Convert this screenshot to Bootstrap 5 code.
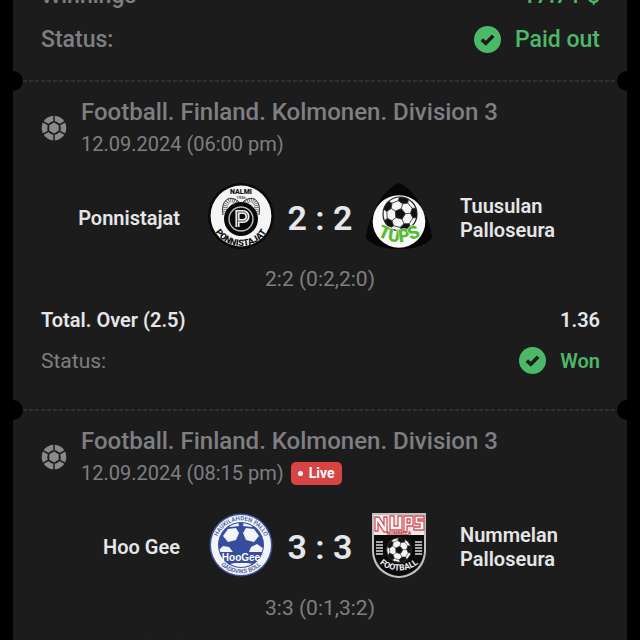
<!DOCTYPE html>
<html lang="en" data-bs-theme="dark">
<head>
<meta charset="utf-8">
<meta name="viewport" content="width=device-width, initial-scale=1">
<title>Bet slip</title>
<link href="https://cdn.jsdelivr.net/npm/bootstrap@5.3.0/dist/css/bootstrap.min.css" rel="stylesheet">
<style>
  body { background: #000; font-family: Roboto, "Liberation Sans", sans-serif; font-size: 20px; line-height: 24px; color: #e6e6e8; overflow-x: hidden; }
  .slip { background: #1c1c1d; margin: 0 13px; }
  .summary { font-size: 23px; font-weight: 500; margin-top: -27px; padding-bottom: 20px; }
  .slip-row { min-height: 41px; padding: 0 27px 0 28px; }
  .payout { min-height: 46px; }
  .dim { color: #7f7f82; }
  .good { color: #4cb968; }
  .state-label { font-size: 21px; }
  .tick { width: 27px; height: 27px; margin-right: 14px; }
  .event { position: relative; padding: 14px 0 28px; }
  .event::before, .event::after { content: ""; position: absolute; top: -11px; width: 20px; height: 20px; border-radius: 50%; background: #000; }
  .event::before { left: -10px; }
  .event::after { right: -10px; }
  .perforation { height: 2px; margin: 0 10px; background: repeating-linear-gradient(90deg, #303032 0 4px, transparent 4px 6px); }
  .event-head { padding: 0 27px 0 28px; gap: 14px; }
  .event-head .ball { width: 26px; height: 26px; }
  .league { font-size: 24px; line-height: 32px; font-weight: 500; }
  .kickoff { font-size: 20px; line-height: 32px; }
  .live { background: #d84343; font-size: 14px; line-height: 23px; padding: 0 7px; border-radius: 5px; font-weight: 700; color: #fff; gap: 6px; margin-left: 7px; }
  .live::before { content: ""; width: 5px; height: 5px; border-radius: 50%; background: #fff; }
  .teams { padding: 0 27px; margin-top: 23px; gap: 28px; font-weight: 600; }
  .duel { width: 224px; }
  .crest { width: 66px; height: 66px; }
  .score { font-size: 34px; line-height: 40px; font-weight: 600; margin-top: 4px; }
  .team-name { padding-top: 3px; }
  .periods { font-size: 21px; line-height: 30px; margin: 15px 0 5px; }
</style>
<script src="https://cdn.jsdelivr.net/npm/bootstrap@5.3.0/dist/js/bootstrap.bundle.min.js"></script>
</head>
<body>
<svg width="0" height="0" class="position-absolute" aria-hidden="true">
  <symbol id="tick" viewBox="0 0 27 27">
    <circle cx="13.5" cy="13.5" r="13.5" fill="#4cb968"/>
    <path d="M7.8 13.6 11.8 17.3 19.2 9.8" fill="none" stroke="#1c1c1d" stroke-width="3.6"/>
  </symbol>
  <symbol id="ball" viewBox="0 0 26 26">
    <circle cx="13" cy="13" r="12.3" fill="#8a8a8d"/>
    <circle cx="13" cy="13" r="6.8" fill="#1c1c1d"/>
    <path d="M13 7.600 17.700 10.300V15.700L13 18.400 8.300 15.700V10.300Z" fill="#8a8a8d"/>
    <path d="M13 0V7M13 19V26M18.200 10 24.500 6.400M18.200 16 24.500 19.600M7.800 10 1.500 6.400M7.800 16 1.500 19.600" fill="none" stroke="#1c1c1d" stroke-width="1.5"/>
  </symbol>
  <clipPath id="ballEdge"><circle r="17"/></clipPath>
  <symbol id="football" viewBox="-18 -18 36 36">
    <circle r="17" fill="#f5f5f5"/>
    <g clip-path="url(#ballEdge)" fill="#111" stroke="#333" stroke-width=".8" transform="rotate(14)">
      <path d="M0-5.5 5.2-1.7 3.2 4.5-3.2 4.5-5.2-1.7Z"/>
      <g id="patch"><path d="M0-10.5 4.9-12.5 4.5-18H-4.5L-4.9-12.5Z"/><path d="M0-5.5V-10.5M4.9-12.5 10.4-8.5" fill="none"/></g>
      <use href="#patch" transform="rotate(72)"/>
      <use href="#patch" transform="rotate(144)"/>
      <use href="#patch" transform="rotate(216)"/>
      <use href="#patch" transform="rotate(288)"/>
    </g>
    <circle r="17" fill="none" stroke="#222" stroke-width="1.2"/>
  </symbol>
</svg>
<main class="slip min-vh-100">
  <section class="summary">
    <div class="slip-row payout d-flex align-items-center justify-content-between"><span class="dim">Winnings</span><span class="good">17.71 $</span></div>
    <div class="slip-row d-flex align-items-center justify-content-between"><span class="dim">Status:</span><span class="good d-flex align-items-center"><svg class="tick" aria-hidden="true"><use href="#tick"/></svg>Paid out</span></div>
  </section>

  <div class="perforation"></div>
  <section class="event">
    <header class="event-head d-flex align-items-center dim">
      <svg class="ball flex-shrink-0" aria-hidden="true"><use href="#ball"/></svg>
      <div>
        <div class="league">Football. Finland. Kolmonen. Division 3</div>
        <div class="kickoff">12.09.2024 (06:00 pm)</div>
      </div>
    </header>
    <div class="teams d-flex align-items-center">
      <div class="team-name col text-end">Ponnistajat</div>
      <div class="duel d-flex align-items-center justify-content-between flex-shrink-0">
        <svg class="crest" viewBox="0 0 66 66" role="img" aria-label="Ponnistajat crest">
          <defs><path id="arcA" d="M4.5 41A29 27 0 0 0 61.5 41"/></defs>
          <circle cx="33" cy="33" r="33" fill="#090909"/>
          <circle cx="33" cy="33" r="30.4" fill="#f5f5f5"/>
          <text x="33" y="11" text-anchor="middle" font-size="7" font-weight="900" fill="#111">NALMI</text>
          <text x="33" y="15.5" text-anchor="middle" font-size="4" font-weight="700" fill="#444">1926</text>
          <g fill="none" stroke="#777" stroke-width="5">
            <path d="M30 21C23 13 15 18 18 31" stroke-dasharray="1 1"/>
            <path d="M36 21C43 13 51 18 48 31" stroke-dasharray="1 1"/>
            <path d="M31 19C22 11 12 17 15 32M35 19C44 11 54 17 51 32" stroke="#333" stroke-width="1"/>
          </g>
          <circle cx="33" cy="36" r="17" fill="#090909"/>
          <circle cx="33" cy="36" r="12" fill="none" stroke="#bbb" stroke-width="1.4"/>
          <path d="M29.5 44V29H35C41 29 41 38 35 38H30" fill="none" stroke="#e8e8e8" stroke-width="4.2"/>
          <path d="M29.5 44V29H35C41 29 41 38 35 38H30" fill="none" stroke="#333" stroke-width=".8"/>
          <text font-size="9" font-weight="900" fill="#111" text-anchor="middle"><textPath href="#arcA" startOffset="50%">PONNISTAJAT</textPath></text>
        </svg>
        <div class="score">2 : 2</div>
        <svg class="crest" viewBox="0 0 66 66" role="img" aria-label="Tuusulan Palloseura crest">
          <defs><path id="arcB" d="M8 51Q33 67 58 51"/></defs>
          <path d="M33 0C43 4 51 14 56 25C61 35 65 43 66 55C60 63 47 66 33 66S6 63 0 55C1 43 5 35 10 25C15 14 23 4 33 0Z" fill="#060606"/>
          <circle cx="33" cy="38.5" r="26.3" fill="#fafafa"/>
          <use href="#football" x="16" y="13" width="36" height="36"/>
          <text font-size="18" font-weight="900" fill="#55bd31" stroke="#fafafa" stroke-width="1" paint-order="stroke" text-anchor="middle"><textPath href="#arcB" startOffset="50%">TUPS</textPath></text>
        </svg>
      </div>
      <div class="team-name col">Tuusulan Palloseura</div>
    </div>
    <div class="periods dim text-center">2:2 (0:2,2:0)</div>
    <div class="slip-row d-flex align-items-center justify-content-between fw-semibold"><span>Total. Over (2.5)</span><span>1.36</span></div>
    <div class="slip-row d-flex align-items-center justify-content-between"><span class="dim state-label">Status:</span><span class="good fw-semibold d-flex align-items-center"><svg class="tick" aria-hidden="true"><use href="#tick"/></svg>Won</span></div>
  </section>

  <div class="perforation"></div>
  <section class="event">
    <header class="event-head d-flex align-items-center dim">
      <svg class="ball flex-shrink-0" aria-hidden="true"><use href="#ball"/></svg>
      <div>
        <div class="league">Football. Finland. Kolmonen. Division 3</div>
        <div class="d-flex align-items-center"><span class="kickoff">12.09.2024 (08:15 pm)</span><span class="live d-flex align-items-center">Live</span></div>
      </div>
    </header>
    <div class="teams d-flex align-items-center">
      <div class="team-name col text-end">Hoo Gee</div>
      <div class="duel d-flex align-items-center justify-content-between flex-shrink-0">
        <svg class="crest" viewBox="0 0 66 66" role="img" aria-label="Hoo Gee crest">
          <defs>
            <path id="arcC" d="M12 47A25 25 0 1 1 54 47"/>
            <path id="arcD" d="M6 42A28.5 28.5 0 0 0 60 42"/>
            <clipPath id="ballC"><circle cx="33" cy="33" r="22"/></clipPath>
          </defs>
          <circle cx="33" cy="33" r="31.5" fill="#3d509c"/>
          <circle cx="33" cy="33" r="30" fill="#f2f4fa"/>
          <circle cx="33" cy="33" r="23" fill="#374d9d"/>
          <g clip-path="url(#ballC)" fill="#f4f5fa">
            <path d="M20 17 28 16 31 21 28 28 20 30 15 24ZM38 16 46 17 51 24 46 30 38 28 35 21ZM19 11 30 9 31 14 22 15ZM47 11 36 9 35 14 44 15ZM10 39 15 34 21 35 25 40H10ZM41 40 43 35 49 32 56 37V40Z"/>
            <path d="M22 52 27 51H39L45 52 40 57H27Z"/>
          </g>
          <text x="33" y="48.5" font-size="10" font-family="Liberation Sans, sans-serif" fill="#fff" text-anchor="middle">HooGee</text>
          <g font-size="6" fill="#45558f" font-weight="500" text-anchor="middle">
            <text><textPath href="#arcC" startOffset="50%">HAUKILAHDEN PALLO</textPath></text>
            <text><textPath href="#arcD" startOffset="50%">GÄDDVIKS BOLL</textPath></text>
          </g>
        </svg>
        <div class="score">3 : 3</div>
        <svg class="crest" viewBox="0 0 66 66" role="img" aria-label="Nummelan Palloseura crest">
          <defs><path id="arcE" d="M9 44A24.5 18 0 0 0 57 44"/></defs>
          <path d="M6 1H60V38C60 54 49 65 33 66C17 65 6 54 6 38Z" fill="#bfc1c1"/>
          <path d="M8 3H58V38C58 52 48 63 33 64C18 63 8 52 8 38Z" fill="#0b0b0b"/>
          <path d="M8 3H58V23H8Z" fill="#f1e8e7"/>
          <path d="M9 19V5H13L18 13V5H21V20H18L12 11V19ZM24 4H28V14H32V4H36V18H24ZM38 4H47V14H41V20H38ZM41 7V11H44V7ZM49 4H58V7H52V9H58V18H48V15H54V12H49Z" fill="#fff" stroke="#d64e53" stroke-width="1.3"/>
          <text x="33" y="23" font-size="5" font-weight="900" fill="#bd4a4e" text-anchor="middle">NUMMELA</text>
          <path d="M10 30H17M10 33H17M10 36H17M10 39H17M10 42H17M49 30H56M49 33H56M49 36H56M49 39H56M49 42H56" stroke="#ddd" stroke-width="1.7"/>
          <use href="#football" x="20" y="25" width="26" height="26"/>
          <text font-size="8.5" font-weight="700" fill="#f3f3f3" text-anchor="middle"><textPath href="#arcE" startOffset="50%">FOOTBALL</textPath></text>
        </svg>
      </div>
      <div class="team-name col">Nummelan Palloseura</div>
    </div>
    <div class="periods dim text-center">3:3 (0:1,3:2)</div>
    <div class="slip-row d-flex align-items-center justify-content-between fw-semibold"><span>Total. Over (2.5)</span></div>
  </section>
</main>
</body>
</html>
